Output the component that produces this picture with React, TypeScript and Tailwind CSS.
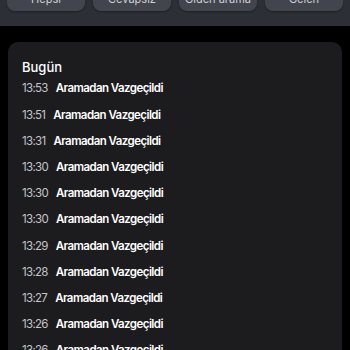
export default function App() {
  const times = ["13:53", "13:51", "13:31", "13:30", "13:30", "13:30", "13:29", "13:28", "13:27", "13:26", "13:26"];
  const tabs = ["Hepsi", "Cevapsız", "Giden arama", "Gelen"];
  return (
    <div className="w-[350px] h-[350px] overflow-hidden bg-black" style={{ fontFamily: "Inter, 'Noto Sans', sans-serif" }}>
      <div className="h-[26px] bg-[#2d2f37] flex gap-[8px] px-[7px] shadow-[0_1px_2px_rgba(0,0,0,0.5)]">
        {tabs.map((t, i) => (
          <div key={i} className="flex-1 h-[11px] rounded-b-[8px] bg-[#42444e] flex items-end justify-center overflow-hidden shadow-[0_1px_2px_rgba(0,0,0,0.35)]">
            <span className="text-[11px] leading-[12px] text-[#d0d1d6] translate-y-[-6px]">{t}</span>
          </div>
        ))}
      </div>
      <div className="mt-[16px] mx-[8px] rounded-[10px] bg-[#1c1c1e] pt-[17px] pl-[14px]">
        <div className="text-[13px] leading-[16px] font-medium text-white mb-[1px]">Bugün</div>
        {times.map((t, i) => (
          <div key={i} className="h-[26.2px] flex items-center gap-[8px] text-[11.5px]">
            <span className="text-[#c4c4c9] tracking-[-0.7px]">{t}</span>
            <span className="text-white font-semibold tracking-[-0.55px]">Aramadan Vazgeçildi</span>
          </div>
        ))}
      </div>
    </div>
  );
}
